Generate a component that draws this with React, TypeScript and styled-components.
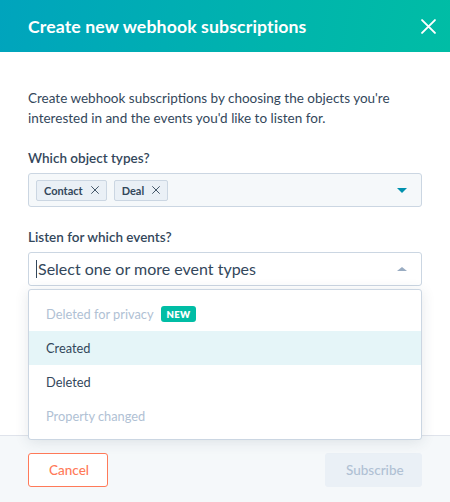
import { FC } from 'react';
import styled, { createGlobalStyle } from 'styled-components';

// #region styles
const GlobalStyle = createGlobalStyle`
  html, body {
    margin: 0;
    padding: 0;
    background: #ffffff;
  }
  body {
    font-family: Lato, "Open Sans", sans-serif;
    color: #33475b;
    -webkit-font-smoothing: antialiased;
  }
  * { box-sizing: border-box; }
`;

const Modal = styled.div`
  position: relative;
  width: 450px;
  height: 502px;
  overflow: hidden;
  display: flex;
  flex-direction: column;
  background: #ffffff;
`;

const Header = styled.div`
  height: 52px;
  flex: none;
  display: flex;
  align-items: center;
  justify-content: space-between;
  padding: 0 13px 0 28px;
  background: linear-gradient(100deg, #00a4bd 0%, #00b4ad 60%, #00bda5 100%);
`;

const Title = styled.h2`
  margin: 0;
  font-size: 17.7px;
  font-weight: 700;
  color: #ffffff;
  letter-spacing: 0.1px;
`;

const CloseButton = styled.button`
  border: none;
  background: transparent;
  padding: 0;
  width: 18px;
  height: 18px;
  display: flex;
  align-items: center;
  justify-content: center;
  cursor: pointer;
`;

const Body = styled.div`
  flex: 1;
  padding: 36px 28px 0 28px;
`;

const Description = styled.p`
  margin: 0;
  font-size: 13.5px;
  line-height: 20px;
  color: #33475b;
`;

const Field = styled.div`
  margin-top: 20px;
  position: relative;
`;

const Label = styled.label`
  display: block;
  font-size: 13.5px;
  line-height: 20px;
  font-weight: 600;
  color: #33475b;
  margin-bottom: 5px;
`;

const InputBox = styled.div<{ $filled?: boolean }>`
  height: 34px;
  display: flex;
  align-items: center;
  gap: 7px;
  padding: 0 14px 0 7px;
  border: 1px solid #cbd6e2;
  border-radius: 3px;
  background: ${(p) => (p.$filled ? '#f5f8fa' : '#ffffff')};
`;

const Chip = styled.span`
  display: inline-flex;
  align-items: center;
  gap: 8px;
  height: 21px;
  padding: 0 7px;
  background: #eaf0f6;
  border: 1px solid #cbd6e2;
  border-radius: 2px;
  font-size: 11px;
  font-weight: 700;
  color: #33475b;
`;

const Placeholder = styled.span`
  flex: 1;
  font-size: 16px;
  color: #33475b;
  padding-left: 1px;
  border-left: 1px solid #33475b;
  line-height: 18px;
`;

const Spacer = styled.span`
  flex: 1;
`;

const Caret = styled.span<{ $up?: boolean; $color: string }>`
  width: 0;
  height: 0;
  border-left: 5px solid transparent;
  border-right: 5px solid transparent;
  ${(p) =>
    p.$up
      ? `border-bottom: 4px solid ${p.$color};`
      : `border-top: 5px solid ${p.$color};`}
`;

const Dropdown = styled.ul`
  position: absolute;
  left: 0;
  right: 0;
  top: 62px;
  margin: 0;
  padding: 7px 0 0 0;
  list-style: none;
  background: #ffffff;
  border: 1px solid #cbd6e2;
  border-radius: 3px;
  box-shadow: 0 2px 14px rgba(45, 62, 80, 0.12);
  z-index: 2;
  height: 151px;
`;

const Option = styled.li<{ $disabled?: boolean; $active?: boolean }>`
  display: flex;
  align-items: center;
  gap: 7px;
  height: 34px;
  padding: 0 17px;
  font-size: 12.8px;
  color: ${(p) => (p.$disabled ? '#b0c1d4' : '#33475b')};
  background: ${(p) => (p.$active ? '#e5f5f8' : 'transparent')};
`;

const NewBadge = styled.span`
  display: inline-flex;
  align-items: center;
  height: 16px;
  padding: 0 6px;
  background: #00bda5;
  border-radius: 3px;
  color: #ffffff;
  font-size: 9.5px;
  font-weight: 800;
  letter-spacing: 0.3px;
`;

const Footer = styled.div`
  flex: none;
  height: 67px;
  display: flex;
  align-items: flex-start;
  justify-content: space-between;
  padding: 17px 28px 0 28px;
  background: #f5f8fa;
  border-top: 1px solid #dfe3eb;
`;

const Button = styled.button<{ $variant: 'secondary' | 'disabled' }>`
  height: 34px;
  padding: 0 20px;
  border-radius: 3px;
  font-family: inherit;
  font-size: 13.5px;
  font-weight: 500;
  cursor: pointer;
  ${(p) =>
    p.$variant === 'secondary'
      ? `
    width: 80px;
    background: #ffffff;
    border: 1px solid #ff7a59;
    color: #ff7a59;
  `
      : `
    width: 97px;
    background: #eaf0f6;
    border: 1px solid #eaf0f6;
    color: #b0c1d4;
    cursor: not-allowed;
  `}
`;
// #endregion

const SmallX: FC<{ size: number; color: string; stroke: number }> = ({ size, color, stroke }) => (
  <svg width={size} height={size} viewBox="0 0 14 14">
    <path d="M1 1 L13 13 M13 1 L1 13" stroke={color} strokeWidth={stroke} strokeLinecap="round" />
  </svg>
);

const objectTypes = ['Contact', 'Deal'];

const eventOptions = [
  { label: 'Deleted for privacy', disabled: true, isNew: true },
  { label: 'Created', active: true },
  { label: 'Deleted' },
  { label: 'Property changed', disabled: true },
];

const App: FC = () => {
  return (
    <>
      <GlobalStyle />
      <Modal>
        <Header>
          <Title>Create new webhook subscriptions</Title>
          <CloseButton aria-label="Close">
            <SmallX size={15} color="#ffffff" stroke={1.8} />
          </CloseButton>
        </Header>
        <Body>
          <Description>
            Create webhook subscriptions by choosing the objects you're
            <br />
            interested in and the events you'd like to listen for.
          </Description>
          <Field>
            <Label>Which object types?</Label>
            <InputBox $filled>
              {objectTypes.map((type) => (
                <Chip key={type}>
                  {type}
                  <SmallX size={8} color="#33475b" stroke={1.6} />
                </Chip>
              ))}
              <Spacer />
              <Caret $color="#0091ae" />
            </InputBox>
          </Field>
          <Field>
            <Label>Listen for which events?</Label>
            <InputBox>
              <Placeholder>Select one or more event types</Placeholder>
              <Caret $up $color="#99acc2" />
            </InputBox>
            <Dropdown>
              {eventOptions.map((opt) => (
                <Option key={opt.label} $disabled={opt.disabled} $active={opt.active}>
                  {opt.label}
                  {opt.isNew && <NewBadge>NEW</NewBadge>}
                </Option>
              ))}
            </Dropdown>
          </Field>
        </Body>
        <Footer>
          <Button $variant="secondary">Cancel</Button>
          <Button $variant="disabled">Subscribe</Button>
        </Footer>
      </Modal>
    </>
  );
};

export default App;
